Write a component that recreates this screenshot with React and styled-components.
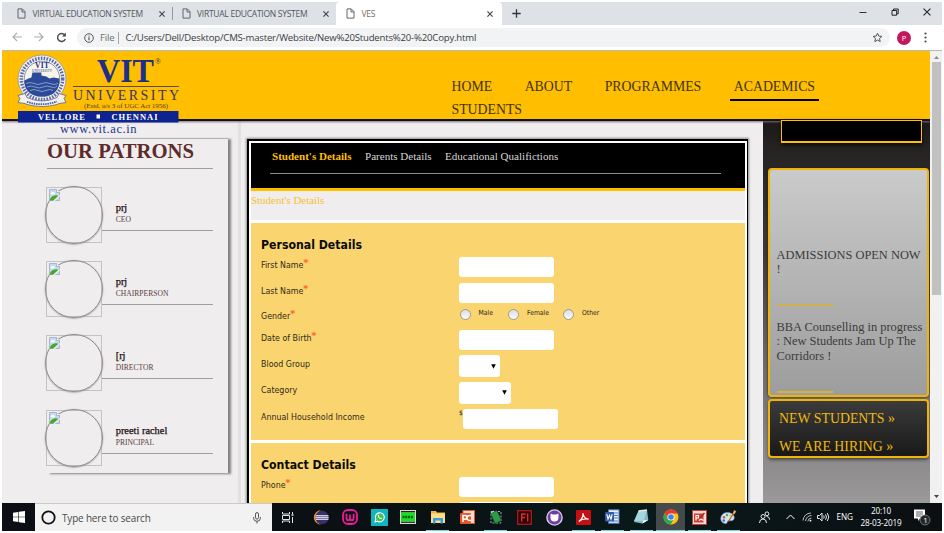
import React from 'react';
import styled, { createGlobalStyle, css } from 'styled-components';

const GlobalStyle = createGlobalStyle`
  * { box-sizing: border-box; }
  html, body { margin: 0; background: #fff; overflow: hidden; }
`;

const serif = '"Liberation Serif", serif';
const sans = '"Open Sans", "Noto Sans", sans-serif';
const gold = '#ffbe00';

const Screen = styled.div`
  width: 940px;
  height: 529px;
  margin: 2px;
  display: flex;
  flex-direction: column;
  overflow: hidden;
  background: #fff;
  cursor: default;
  svg { display: block; flex: none; }
`;

/* ---------- browser chrome ---------- */
const TabStrip = styled.div`
  height: 23px;
  flex: none;
  display: flex;
  background: #dee1e6;
`;
const Tab = styled.div`
  width: ${(p) => p.$width}px;
  display: flex;
  align-items: center;
  padding: 0 ${(p) => p.$right}px 0 ${(p) => p.$left}px;
  font: 8.5px/12px ${sans};
  letter-spacing: -0.27px;
  color: #54575b;
  white-space: nowrap;
  ${(p) => p.$active && css`
    background: #fff;
    border-radius: 4px 4px 0 0;
    color: #7b6a5c;
  `}
`;
const TabLabel = styled.span`
  flex: 1;
  margin-left: 6.5px;
`;
const TabDivider = styled.div`
  width: 1px;
  height: 13px;
  align-self: center;
  background: #96999d;
`;
const NewTab = styled.div`
  display: flex;
  align-items: center;
  margin-left: 10px;
`;
const WindowButtons = styled.div`
  margin-left: auto;
  display: flex;
  align-items: center;
  gap: 24px;
  padding: 0 11px 3px 0;
`;
const Toolbar = styled.div`
  height: 26px;
  flex: none;
  display: flex;
  align-items: center;
  padding: 0 10px;
  border-bottom: 1px solid #b9b9b9;
`;
const NavIcons = styled.div`
  display: flex;
  gap: 12px;
`;
const AddressBar = styled.div`
  height: 19px;
  width: 813px;
  margin-left: 10px;
  display: flex;
  align-items: center;
  padding: 0 7px;
  border-radius: 10px;
  background: #f1f3f4;
  font: 9.6px/14px ${sans};
  letter-spacing: -0.2px;
  color: #3c4043;
  white-space: nowrap;
`;
const Scheme = styled.span`
  margin: 0 6px 0 6px;
  padding-right: 4px;
  border-right: 1px solid #a5a8ab;
  line-height: 12px;
  color: #6c7074;
`;
const Url = styled.span`
  flex: 1;
`;
const Avatar = styled.div`
  width: 14px;
  height: 14px;
  margin: 0 13px 0 7px;
  border-radius: 50%;
  background: #c2185b;
  color: #fff;
  font: 7.5px/14px ${sans};
  text-align: center;
`;

/* ---------- page ---------- */
const Viewport = styled.div`
  height: 452px;
  flex: none;
  display: flex;
`;
const Page = styled.div`
  width: 928px;
  overflow: hidden;
  background: #efedee;
`;
const Header = styled.header`
  position: relative;
  z-index: 1;
  height: 70px;
  display: flex;
  justify-content: space-between;
  background: ${gold};
  border-bottom: 2px solid #14121c;
  box-shadow: 0 1px 2px #77737a;
`;
const Nav = styled.nav`
  width: 402px;
  margin-right: 80px;
  padding-top: 26px;
  display: flex;
  flex-wrap: wrap;
  align-content: flex-start;
  column-gap: 25.5px;
`;
const NavItem = styled.a`
  margin-bottom: -1px;
  padding: 0 3.5px 3px;
  border-bottom: 2.5px solid ${(p) => (p.$current ? '#000' : 'transparent')};
  font: 13.8px/19px ${serif};
  color: #40330e;
`;
const Columns = styled.div`
  display: flex;
  height: 382px;
`;

/* patrons */
const Left = styled.aside`
  width: 245px;
  flex: none;
  padding: 17px 0 0 45px;
  background: linear-gradient(90deg, transparent 236px, #e2e0e1 236px, #e2e0e1 238.5px, transparent 238.5px);
`;
const Patrons = styled.section`
  width: 181px;
  height: 335px;
  border-top: 1px solid #b5b3b4;
  box-shadow: 2.5px 1px 2px #858384;
`;
const PatronsTitle = styled.h2`
  margin: 0 15px 0 0;
  height: 29.5px;
  border-bottom: 1px solid #a09e9f;
  font: bold 20.7px/24px ${serif};
  color: #5e2b2b;
  white-space: nowrap;
`;
const Patron = styled.div`
  height: 74.4px;
  padding: 18px 15px 0 0;
  display: flex;
`;
const Photo = styled.div`
  width: 56px;
  height: 56px;
  margin-left: -1px;
  padding: 1px;
  border: 1px solid #c4c2c3;
`;
const PhotoRing = styled.div`
  width: 58px;
  height: 58px;
  margin: -3px;
  padding: 2px 3px;
  border-radius: 50%;
  border: 1px solid #8e8c8d;
  box-shadow: 0 0.5px 1.5px #8e8c8d;
`;
const PatronInfo = styled.div`
  flex: 1;
  height: 44px;
  padding: 15px 0 0 13.7px;
  border-bottom: 1px solid #a09e9f;
`;
const PatronName = styled.div`
  font: 10.4px/11px ${serif};
  -webkit-text-stroke: 0.25px #1c0c10;
  color: #1c0c10;
  white-space: nowrap;
`;
const PatronRole = styled.div`
  padding-top: 2px;
  font: 7.6px/10px ${serif};
  color: #5d3f40;
`;

/* form panel */
const Panel = styled.main`
  width: 501px;
  flex: none;
  margin-top: 18px;
  padding: 2px 2px 0 2px;
  border: solid #000;
  border-width: 2px 1px 0 2px;
  box-shadow: 0 0 2px 1px #8d8b8c;
  background: #fff;
`;
const FormTabs = styled.div`
  height: 48px;
  padding: 6px 24px 0 19px;
  background: #000;
  border-bottom: 3px solid ${gold};
`;
const FormTabList = styled.div`
  height: 25px;
  padding: 0 2px;
  display: flex;
  gap: 13.5px;
  border-bottom: 1px solid #8b8b8b;
`;
const FormTab = styled.span`
  font: ${(p) => (p.$current ? 'bold' : 'normal')} 11.05px/14px ${serif};
  color: ${(p) => (p.$current ? gold : '#d6d6d6')};
`;
const Crumb = styled.div`
  height: 29px;
  padding-top: 2px;
  background: #efedee;
  font: 10.95px/14px ${serif};
  color: #fbc02f;
`;
const Fieldset = styled.section`
  height: ${(p) => p.$height}px;
  margin-top: 3px;
  padding: 13px 0 0 10px;
  overflow: hidden;
  background: #fad56f;
`;
const FieldsetTitle = styled.h3`
  margin: 0;
  height: 18px;
  font: bold 12.2px/18px "DejaVu Sans Condensed", sans-serif;
  color: #0b0b06;
`;
const Field = styled.div`
  height: ${(p) => p.$height}px;
  display: grid;
  grid-template-columns: 198px 1fr;
  align-items: center;
  font: 8.8px/12px "DejaVu Sans Condensed", sans-serif;
  color: #2f2a18;
`;
const Label = styled.label`
  display: flex;
  margin-bottom: ${(p) => p.$lift ?? 5}px;
`;
const Star = styled.span`
  margin-top: -1.5px;
  color: #ff5430;
  font: 9.5px/12px "DejaVu Sans", sans-serif;
  -webkit-text-stroke: 0.2px #ff5430;
`;
const Control = styled.div`
  display: flex;
`;
const Input = styled.div`
  width: 95px;
  height: 20.5px;
  border-radius: 3px;
  background: #fff;
`;
const Select = styled(Input)`
  width: ${(p) => p.$width}px;
  height: 22px;
  display: flex;
  align-items: center;
  justify-content: flex-end;
  padding-right: 4px;
`;
const Currency = styled.span`
  width: 4px;
  font-size: 6.5px;
  line-height: 9px;
  color: #222;
`;
const Radios = styled.div`
  display: flex;
  margin-bottom: 6px;
`;
const RadioOption = styled.div`
  width: ${(p) => p.$width}px;
  display: flex;
  align-items: center;
  font-size: 6.8px;
  line-height: 11px;
  color: #2b2616;
`;
const RadioDot = styled.span`
  width: 11px;
  height: 11px;
  margin: 2px 8px 0 0.5px;
  border: 1px solid #9d9b96;
  border-radius: 50%;
  background: linear-gradient(#dedede, #fafafa);
`;
const RadioText = styled.span`
  margin-top: -1px;
`;

/* sidebar */
const Side = styled.aside`
  width: 167px;
  margin-left: auto;
  display: flex;
  flex-direction: column;
  padding: 0 1px 0 5px;
  background: linear-gradient(#1c1918, #262423 8%, #3c3a3a 35%, #6b6969 62%, #878586 85%, #9b999a);
`;
const Banner = styled.div`
  position: relative;
  z-index: 2;
  width: 141px;
  height: 23px;
  flex: none;
  margin: -1px 0 25px 13px;
  border: 1px solid ${gold};
  border-bottom-width: 2px;
  background: #000;
  box-shadow: 0 2px 4px #0a0a0a;
`;
const News = styled.section`
  height: 229px;
  flex: none;
  padding: 78px 4px 0 6.5px;
  border: 2px solid #f0b306;
  border-radius: 4px;
  background: linear-gradient(#cacaca, #9d9d9d);
  box-shadow: 0 0 3px #222;
`;
const NewsItem = styled.p`
  margin: 0 -4px 0 0;
  height: ${(p) => p.$height}px;
  font: 12.42px/14.4px ${serif};
  color: #3b3b3b;
`;
const NewsRule = styled.div`
  width: 56px;
  height: 2px;
  margin-bottom: 14px;
  background: linear-gradient(#e0b228 50%, #c5b070 50%);
`;
const Links = styled.section`
  height: 59px;
  flex: none;
  margin-top: 2px;
  padding: 4px 0 0 9px;
  display: flex;
  flex-direction: column;
  border: 2px solid #f0b306;
  border-radius: 4px;
  background: linear-gradient(#3b3b3b, #191919);
  box-shadow: 0 2px 3px #4c4c4c;
`;
const SideLink = styled.a`
  font: 13.85px/28px ${serif};
  white-space: nowrap;
  color: #f2b90c;
`;

const Scrollbar = styled.div`
  width: 12px;
  display: flex;
  flex-direction: column;
  align-items: center;
  justify-content: space-between;
  padding: 5px 1px;
  background: #f1f1f1;
`;
const Thumb = styled.div`
  width: 9px;
  height: 233px;
  margin: 3px 0 auto;
  background: #c1c1c1;
`;

/* ---------- taskbar ---------- */
const Taskbar = styled.footer`
  height: 28px;
  flex: none;
  display: flex;
  background: linear-gradient(90deg, #0b0e14, #0a1113 45%, #09191a 70%, #0b0f12);
`;
const Start = styled.div`
  width: 33px;
  display: flex;
  align-items: center;
  justify-content: center;
`;
const Search = styled.div`
  width: 237px;
  display: flex;
  align-items: center;
  padding: 0 11px 0 6px;
  background: #f2f2f2;
  border-top: 1px solid #c9c9c9;
  font: 9.9px/14px ${sans};
  letter-spacing: -0.12px;
  color: #4a4a4a;
`;
const SearchText = styled.span`
  flex: 1;
  margin-left: 6px;
`;
const TaskView = styled.div`
  width: 34.5px;
  display: flex;
  align-items: center;
  padding-left: 10px;
`;
const TaskButton = styled.div`
  width: 29.14px;
  display: flex;
  flex-direction: column;
  align-items: center;
  justify-content: center;
  position: relative;
  background: ${(p) => (p.$focused ? '#454b4c' : 'none')};
  &::after {
    content: '';
    position: absolute;
    left: ${(p) => (p.$focused ? 0 : 3)}px;
    right: ${(p) => (p.$focused ? 0 : 3)}px;
    bottom: 0;
    height: ${(p) => (p.$running ? 1.5 : 0)}px;
    background: #6fd6e6;
  }
`;
const Tray = styled.div`
  margin-left: auto;
  width: 184px;
  display: flex;
  align-items: center;
  color: #fff;
  font: 8.2px/12px ${sans};
  letter-spacing: -0.15px;
`;
const TrayIcons = styled.div`
  width: 78.5px;
  display: flex;
  align-items: center;
  gap: 5px;
`;
const Language = styled.span`
  width: 23.5px;
`;
const Clock = styled.div`
  width: 42px;
  text-align: center;
  white-space: nowrap;
`;
const Notify = styled.div`
  margin-left: 12px;
`;

/* ---------- icons ---------- */
const FileIcon = () => (
  <svg width="9" height="11" viewBox="0 0 9 11" fill="none" stroke="#63666a" strokeWidth="1">
    <path d="M1 .9h4.3L8 3.6v6.5H1zM5 1v3h3" />
  </svg>
);
const CloseIcon = ({ size = 6, color = '#46494d', w = 1.2 }) => (
  <svg width={size} height={size} viewBox="0 0 6 6" stroke={color} strokeWidth={w}>
    <path d="M.4.4l5.2 5.2M5.6.4L.4 5.6" />
  </svg>
);
const PlusIcon = () => (
  <svg width="9" height="9" viewBox="0 0 9 9" stroke="#33363a" strokeWidth="1.300">
    <path d="M4.500.3v8.400M.3 4.500h8.400" />
  </svg>
);

const Logo = () => (
  <svg width="180" height="86" viewBox="0 0 180 86" fill="#1d2f86" fontFamily="Liberation Serif, serif">
    <g transform="translate(0 -1.500)">
      <circle cx="40" cy="29.500" r="24" fill="#f4f1e8" stroke="#8a93ad" strokeWidth=".8" />
      <circle cx="40" cy="29.500" r="20.700" fill="none" stroke="#5b6bab" strokeWidth="3.400" strokeDasharray="1.600 1.300" />
      <circle cx="40" cy="29.500" r="17.800" fill="#f7f4ea" stroke="#3c4f9c" strokeWidth=".6" />
      <path d="M22.400 31l4-2 3-1 1-5h9v3l5 1 3 2 4-1 6 1c.5 7-2 12-6 15-6 4-17 4-23 0-4-3-6-7-6-13z" fill="#2b4a98" />
      <path d="M24 34q4-2 8 0t8 0 8 0 8 0M25 37.500q4-2 8 0t8 0 8 0 6-1M28 41q4-2 8 0t8 0 7 0" fill="none" stroke="#9fb0d6" strokeWidth=".8" />
      <text x="33" y="18.500" fontSize="7.500" fontWeight="bold" textLength="14">VIT</text>
      <text x="30" y="22" fontSize="3" textLength="20">UNIVERSITY</text>
      <path d="M16 46l7-2 2 4q15 7 30 0l2-4 7 2-2 3 2 4-7 1-2 1q-15 4-30 0l-2-1-7-1 2-4z" fill="#f4f1e8" stroke="#56659f" strokeWidth=".8" />
      <path d="M25 52.300q15 5 30-.3" fill="none" stroke="#4a5b9d" strokeWidth="1.800" strokeDasharray="1.500 .8" />
    </g>
    <text x="95" y="31" fontSize="33" fontWeight="bold" textLength="57" lengthAdjust="spacingAndGlyphs">VIT</text>
    <text x="153" y="12.500" fontSize="7.500">®</text>
    <rect x="71" y="35" width="106" height="1" fill="#5b4c52" />
    <text x="71" y="48.500" fontSize="14" textLength="106" fill="#3a3563">UNIVERSITY</text>
    <text x="82" y="57" fontSize="7" textLength="84" fill="#52412f">(Estd. u/s 3 of UGC Act 1956)</text>
    <rect x="16" y="60" width="160.500" height="11.500" fill="#0d2390" />
    <text x="36" y="68.800" fontSize="8.500" fontWeight="bold" fill="#fff" textLength="47">VELLORE</text>
    <rect x="94.500" y="63.500" width="3.500" height="4" fill="#fff" />
    <text x="109.500" y="68.800" fontSize="8.500" fontWeight="bold" fill="#fff" textLength="46">CHENNAI</text>
    <text x="58" y="82" fontSize="12.500" textLength="76.500" fill="#25378c">www.vit.ac.in</text>
  </svg>
);

const BrokenImage = () => (
  <svg width="11" height="12" viewBox="0 0 11 12">
    <path d="M.5.5h7l3 3v8H.5z" fill="#c3d9f8" stroke="#a4abb5" strokeWidth=".8" />
    <path d="M7.500.5v3h3" fill="#fff" stroke="#9aa0a8" strokeWidth=".7" />
    <ellipse cx="3.800" cy="4.200" rx="2" ry="1.300" fill="#fff" />
    <path d="M1 10Q3 6 7.500 6.200L9.500 7 4.500 11.500H1z" fill="#44a82b" />
    <path d="M4.800 12L11 6.500" stroke="#efedee" strokeWidth="1.300" />
  </svg>
);

const icons = {
  eclipse: (
    <svg width="16" height="15" viewBox="0 0 16 15">
      <path d="M8 .3a7.200 7.200 0 0 0 0 14.400A8 8 0 0 1 8 .3z" fill="#f0962a" />
      <circle cx="9" cy="7.500" r="6.700" fill="#3c2f66" />
      <path d="M2.600 5.600h12.800M2.400 7.500h13.200M2.600 9.400h12.800" stroke="#c9c9e6" strokeWidth="1.300" />
    </svg>
  ),
  wamp: (
    <svg width="16" height="16" viewBox="0 0 16 16" fill="none" stroke="#f4189b">
      <rect x="1" y="1" width="14" height="14" rx="5" strokeWidth="1.800" />
      <path d="M4.500 4.800v4.400q0 2 1.800 2T8 9.200V5.500v3.700q0 2 1.800 2t1.800-2V4.800" strokeWidth="1.700" />
    </svg>
  ),
  whatsapp: (
    <svg width="17" height="17" viewBox="0 0 17 17">
      <rect width="17" height="17" fill="#0fb5c1" />
      <path d="M4 13l.8-2.600A4.500 4.500 0 1 1 6.500 12.200z" fill="#41c352" stroke="#fff" strokeWidth="1.100" />
      <path d="M6.800 6.200q.1 3 3.400 4l1-1-1.300-.8-.7.500-1.300-1.300.4-.7-.7-1.200z" fill="#fff" />
    </svg>
  ),
  dosbox: (
    <svg width="16" height="14" viewBox="0 0 16 14">
      <rect width="16" height="14" fill="#d8d8d8" />
      <rect x="1" y="1" width="14" height="1.500" fill="#222" />
      <rect x="1" y="2.500" width="14" height="9" fill="#18e01e" />
      <path d="M2.500 7h11" stroke="#0a5d10" strokeWidth="2.400" strokeDasharray="2 .8" />
      <path d="M1 12.300h14" stroke="#222" strokeWidth="1.200" />
    </svg>
  ),
  folder: (
    <svg width="16" height="14" viewBox="0 0 16 14">
      <path d="M1 1h5l1 1.500h8V12H1z" fill="#e9b949" />
      <path d="M1 3.500h14v9.500H1z" fill="#fbdf86" />
      <path d="M3 13.500V8h10v5.500h-2.500v-3h-5v3z" fill="#3f9be0" />
    </svg>
  ),
  ppt: (
    <svg width="16" height="15" viewBox="0 0 16 15">
      <rect x="4" y=".5" width="11.500" height="13" fill="#f6d9c9" stroke="#d9572b" />
      <rect x="1" y="3" width="11" height="11" rx="1" fill="#e2562a" />
      <path d="M4 12V5.500h2a1.800 1.800 0 0 1 0 3.700H4M12 5.500h-1.500a2 2 0 0 0 0 5H12" fill="none" stroke="#fff" strokeWidth="1.500" />
    </svg>
  ),
  phone: (
    <svg width="16" height="16" viewBox="0 0 16 16">
      <rect x="3" y="2.500" width="10" height="11.500" fill="none" stroke="#a9adaa" strokeDasharray="2 1.500" />
      <rect x="4.500" y="2.500" width="7" height="11" rx="1" fill="#2d9a48" stroke="#12642a" strokeWidth=".8" transform="rotate(-25 8 8)" />
      <path d="M3 4l3-2" stroke="#e3e3e3" />
    </svg>
  ),
  flash: (
    <svg width="15" height="15" viewBox="0 0 15 15">
      <rect x=".7" y=".7" width="13.600" height="13.600" fill="#2a0306" stroke="#b3181c" strokeWidth="1.300" />
      <path d="M4.700 11.500V4h4M4.700 7.500h3.300M10.700 3.500v8" fill="none" stroke="#e8282d" strokeWidth="1.400" />
    </svg>
  ),
  github: (
    <svg width="17" height="17" viewBox="0 0 17 17">
      <circle cx="8.500" cy="8.500" r="7.600" fill="#6e3fa3" stroke="#d9cfe6" strokeWidth="1.400" />
      <path d="M4.500 4.500l2.300 1h3.400l2.300-1v4q0 4-4 4t-4-4z" fill="#fff" />
    </svg>
  ),
  acrobat: (
    <svg width="15" height="15" viewBox="0 0 15 15">
      <rect width="15" height="15" rx="1" fill="#c41012" />
      <path d="M2.800 11.500Q7.500 8 7 3.200q.5 5 5.500 6Q7 8 2.800 11.500z" fill="none" stroke="#fff" strokeWidth="1.200" />
    </svg>
  ),
  word: (
    <svg width="16" height="16" viewBox="0 0 16 16">
      <rect x="4.500" y=".8" width="10.500" height="13.500" fill="#e8effa" stroke="#4a77bd" />
      <path d="M9 4h5M10 6.500h4M10 9h4M8 12h6" stroke="#4a77bd" />
      <rect x="1" y="3" width="9" height="9.500" rx="1" fill="#2f5ca8" />
      <path d="M2.800 5.200l1.200 5 1.500-4 1.500 4 1.200-5" fill="none" stroke="#fff" strokeWidth="1.100" />
    </svg>
  ),
  notepad: (
    <svg width="16" height="16" viewBox="0 0 16 16">
      <path d="M5.500 2L14 1l1.300 10-5.800 3.500L1 13z" fill="#7fb9c4" />
      <path d="M5.500 2L14 1l-3.500 11L1 12z" fill="#a5d6dd" />
      <path d="M5.500 2L14 1" stroke="#e8e8e8" strokeWidth="1.600" />
      <path d="M15.300 11l-5.800 3.500.9-3z" fill="#fff" />
    </svg>
  ),
  chrome: (
    <svg width="16" height="16" viewBox="0 0 16 16">
      <circle cx="8" cy="8" r="7.500" fill="#fbc116" />
      <path d="M8 4.500h6.600A7.500 7.500 0 0 0 1.500 4.250L5 9.500z" fill="#e33b2e" />
      <path d="M1.500 4.250A7.500 7.500 0 0 0 7.500 15.500L11 9.800 5 9.800z" fill="#2da94f" />
      <circle cx="8" cy="8" r="3.600" fill="#fff" />
      <circle cx="8" cy="8" r="2.800" fill="#3f82ee" />
    </svg>
  ),
  picture: (
    <svg width="15" height="15" viewBox="0 0 15 15">
      <rect x=".5" y=".5" width="14" height="14" fill="#f6dcd8" stroke="#c43a32" />
      <rect x="2" y="3.500" width="9.500" height="9" fill="#cf3d33" />
      <path d="M4 10.500V5.500h2.500V8H4M7 10.500l2-1.500 2.500 1.500" stroke="#fff" strokeWidth="1.200" fill="none" />
      <path d="M7.500 8.500l5-5.500" stroke="#a9241d" strokeWidth="1.300" />
    </svg>
  ),
  paint: (
    <svg width="17" height="16" viewBox="0 0 17 16">
      <path d="M7.500 3.500C3 3.500.8 6.800.8 9.600c0 3.800 3.500 5.400 5.400 4.800 1.500-.5.600-2 1.800-2.700 1.500-.9 3 .6 4.800-.4 1.500-.9 1.700-2.500 1.200-4C13.300 5 10.500 3.500 7.500 3.500z" fill="#cfe6f7" stroke="#6fa3cc" strokeWidth=".6" />
      <circle cx="4" cy="8.200" r="1.200" fill="#e0503a" />
      <circle cx="7" cy="6" r="1.200" fill="#4cae4c" />
      <circle cx="10.500" cy="6.500" r="1.100" fill="#f0c030" />
      <circle cx="3.800" cy="11.500" r="1.200" fill="#3567c6" />
      <path d="M8.500 12.500l5.500-9" stroke="#c96c1e" strokeWidth="1.400" />
      <path d="M13 4.500l1-3.500 2.300 1.400-2.300 3z" fill="#f2b25b" />
    </svg>
  ),
};

const tasks = [
  ['eclipse'], ['wamp'], ['whatsapp'], ['dosbox'], ['folder', true], ['ppt'], ['phone', true],
  ['flash'], ['github'], ['acrobat', true], ['word', true], ['notepad', true],
  ['chrome', true, true], ['picture', true], ['paint', true],
];

const patrons = [
  ['prj', 'CEO'], ['prj', 'CHAIRPERSON'], ['[rj', 'DIRECTOR'], ['preeti rachel', 'PRINCIPAL'],
];

const Arrow = () => (
  <svg width="5" height="5" viewBox="0 0 5 5"><path d="M.2.300h4.600L2.500 4.700z" fill="#000" /></svg>
);

function FormField({ label, required, height, lift, children }) {
  return (
    <Field $height={height}>
      <Label $lift={lift}>{label}{required && <Star>*</Star>}</Label>
      {children}
    </Field>
  );
}

export default function App() {
  return (
    <Screen>
      <GlobalStyle />
      <TabStrip>
        <Tab $width={170} $left={15} $right={7.5}>
          <FileIcon /><TabLabel>VIRTUAL EDUCATION SYSTEM</TabLabel><CloseIcon />
        </Tab>
        <TabDivider />
        <Tab $width={163} $left={8.5} $right={7}>
          <FileIcon /><TabLabel>VIRTUAL EDUCATION SYSTEM</TabLabel><CloseIcon />
        </Tab>
        <Tab $width={166} $left={10} $right={9} $active>
          <FileIcon /><TabLabel>VES</TabLabel><CloseIcon />
        </Tab>
        <NewTab><PlusIcon /></NewTab>
        <WindowButtons>
          <svg width="8" height="8" viewBox="0 0 8 8"><path d="M.5 4.500h7" stroke="#333" strokeWidth="1" /></svg>
          <svg width="8" height="8" viewBox="0 0 8 8" fill="none" stroke="#222"><path d="M1 2.500h4.700v4.700H1zM2.500 2.300V1h4.700v4.700H5.800" /></svg>
          <CloseIcon size={8} color="#222" w={0.8} />
        </WindowButtons>
      </TabStrip>

      <Toolbar>
        <NavIcons>
          <svg width="10" height="10" viewBox="0 0 10 10" fill="none" stroke="#a9abae" strokeWidth="1.100"><path d="M9.800 5H1M5 1L1 5l4 4" /></svg>
          <svg width="10" height="10" viewBox="0 0 10 10" fill="none" stroke="#a9abae" strokeWidth="1.100"><path d="M.2 5H9M5 1l4 4-4 4" /></svg>
          <svg width="11" height="11" viewBox="0 0 11 11" fill="none" stroke="#46494d" strokeWidth="1.400"><path d="M9.300 7A4 4 0 1 1 8.600 2.800" /><path d="M9.900.6v4H6z" fill="#46494d" stroke="none" /></svg>
        </NavIcons>
        <AddressBar>
          <svg width="10" height="10" viewBox="0 0 10 10" fill="none" stroke="#54575b"><circle cx="5" cy="5" r="4.300" /><path d="M5 4.300v3M5 2.400v1.100" strokeWidth="1.200" /></svg>
          <Scheme>File</Scheme>
          <Url>C:/Users/Dell/Desktop/CMS-master/Website/New%20Students%20-%20Copy.html</Url>
          <svg width="11" height="11" viewBox="0 0 11 11" fill="none" stroke="#54575b"><path d="M5.500 1.200l1.300 2.900 3.100.3-2.400 2.100.7 3.100-2.700-1.600-2.700 1.600.7-3.100-2.400-2.100 3.100-.3z" /></svg>
        </AddressBar>
        <Avatar>P</Avatar>
        <svg width="3" height="11" viewBox="0 0 3 11" fill="#46494d"><circle cx="1.500" cy="1.500" r="1.100" /><circle cx="1.500" cy="5.500" r="1.100" /><circle cx="1.500" cy="9.500" r="1.100" /></svg>
      </Toolbar>

      <Viewport>
        <Page>
          <Header>
            <Logo />
            <Nav>
              <NavItem>HOME</NavItem>
              <NavItem>ABOUT</NavItem>
              <NavItem>PROGRAMMES</NavItem>
              <NavItem $current>ACADEMICS</NavItem>
              <NavItem>STUDENTS</NavItem>
            </Nav>
          </Header>
          <Columns>
            <Left>
              <Patrons>
                <PatronsTitle>OUR PATRONS</PatronsTitle>
                {patrons.map(([name, role], i) => (
                  <Patron key={i}>
                    <Photo><PhotoRing><BrokenImage /></PhotoRing></Photo>
                    <PatronInfo>
                      <PatronName>{name}</PatronName>
                      <PatronRole>{role}</PatronRole>
                    </PatronInfo>
                  </Patron>
                ))}
              </Patrons>
            </Left>

            <Panel>
              <FormTabs>
                <FormTabList>
                  <FormTab $current>Student's Details</FormTab>
                  <FormTab>Parents Details</FormTab>
                  <FormTab>Educational Qualifictions</FormTab>
                </FormTabList>
              </FormTabs>
              <Crumb>Student's Details</Crumb>
              <Fieldset $height={217}>
                <FieldsetTitle>Personal Details</FieldsetTitle>
                <FormField label="First Name" required height={26}><Input /></FormField>
                <FormField label="Last Name" required height={26}><Input /></FormField>
                <FormField label="Gender" required height={21} lift={2}>
                  <Radios>
                    <RadioOption $width={48.5}><RadioDot /><RadioText>Male</RadioText></RadioOption>
                    <RadioOption $width={55}><RadioDot /><RadioText>Female</RadioText></RadioOption>
                    <RadioOption $width={50}><RadioDot /><RadioText>Other</RadioText></RadioOption>
                  </Radios>
                </FormField>
                <FormField label="Date of Birth" required height={26}><Input /></FormField>
                <FormField label="Blood Group" height={26.5}><Select $width={41}><Arrow /></Select></FormField>
                <FormField label="Category" height={26.5}><Select $width={52}><Arrow /></Select></FormField>
                <FormField label="Annual Household Income" height={26}>
                  <Control><Currency>$</Currency><Input /></Control>
                </FormField>
              </Fieldset>
              <Fieldset $height={70}>
                <FieldsetTitle>Contact Details</FieldsetTitle>
                <FormField label="Phone" required height={26}><Input /></FormField>
                <FormField height={25}><Input /></FormField>
              </Fieldset>
            </Panel>

            <Side>
              <Banner />
              <News>
                <NewsItem $height={56}>ADMISSIONS OPEN NOW !</NewsItem>
                <NewsRule />
                <NewsItem $height={71}>BBA Counselling in progress : New Students Jam Up The Corridors !</NewsItem>
                <NewsRule />
              </News>
              <Links>
                <SideLink>NEW STUDENTS »</SideLink>
                <SideLink>WE ARE HIRING »</SideLink>
              </Links>
            </Side>
          </Columns>
        </Page>
        <Scrollbar>
          <svg width="5" height="3" viewBox="0 0 5 3"><path d="M0 3l2.500-3L5 3z" fill="#8b8b8b" /></svg>
          <Thumb />
          <svg width="5" height="3" viewBox="0 0 5 3"><path d="M0 0l2.500 3L5 0z" fill="#444" /></svg>
        </Scrollbar>
      </Viewport>

      <Taskbar>
        <Start>
          <svg width="12" height="12" viewBox="0 0 12 12" fill="#fff"><path d="M0 1.700l5.400-.8v4.800H0zM6 .8L12 0v5.700H6zM0 6.300h5.400v4.800L0 10.300zM6 6.300h6V12l-6-.8z" /></svg>
        </Start>
        <Search>
          <svg width="15" height="15" viewBox="0 0 15 15" fill="none" stroke="#111" strokeWidth="1.800"><circle cx="7.500" cy="7.500" r="6.200" /></svg>
          <SearchText>Type here to search</SearchText>
          <svg width="8" height="12" viewBox="0 0 8 12" fill="none" stroke="#555"><rect x="2.500" y=".6" width="3" height="6.500" rx="1.500" /><path d="M.7 5v1.500a3.300 2.800 0 0 0 6.600 0V5M4 9.300v2.200" /></svg>
        </Search>
        <TaskView>
          <svg width="12" height="11" viewBox="0 0 12 11" fill="none" stroke="#e3e3e3"><path d="M.5 0v2h7V0M.5 11V9h7v2M.5 3.500h7v4h-7zM10.500 0v2M10.500 5v6" /><path d="M9.500 3h2" strokeWidth="1.500" /></svg>
        </TaskView>
        {tasks.map(([name, running, focused]) => (
          <TaskButton key={name} $running={running} $focused={focused}>{icons[name]}</TaskButton>
        ))}
        <Tray>
          <TrayIcons>
            <svg width="13" height="13" viewBox="0 0 13 13" fill="none" stroke="#e8e8e8"><circle cx="5" cy="5.500" r="2" /><path d="M1.500 12q0-4 3.500-4t3.500 4" /><circle cx="9" cy="2.800" r="1.900" /><path d="M8.500 5.500q3 0 3.200 3.200" /></svg>
            <svg width="21" height="8" viewBox="0 0 21 8" fill="none" stroke="#fff"><path d="M10.500 6L14.500 2l4 4" /></svg>
            <svg width="10" height="10" viewBox="0 0 10 10" fill="none" stroke="#c9cccc" strokeWidth=".9"><path d="M1 8.500A8 8 0 0 1 9 1M3.500 9A6 6 0 0 1 9.500 3.500M5.800 9.300A4 4 0 0 1 9.500 6" /><circle cx="8.500" cy="8.700" r=".9" fill="#fff" stroke="none" /></svg>
            <svg width="13" height="10" viewBox="0 0 13 10" fill="none" stroke="#fff" strokeWidth=".9"><path d="M.5 3.500h2L5 1v8L2.500 6.500h-2zM6.700 3.500q1 1.500 0 3M8.500 2.300q2 2.700 0 5.400M10.300 1q3 4 0 8" /></svg>
          </TrayIcons>
          <Language>ENG</Language>
          <Clock>20:10<br />28-03-2019</Clock>
          <Notify>
            <svg width="17" height="18" viewBox="0 0 17 18">
              <path d="M0 1.500h11v9H6L4 13v-2.500H0z" fill="#fff" />
              <path d="M2 4h7M2 6h7M2 8h5" stroke="#333" strokeWidth=".8" />
              <circle cx="11" cy="12" r="5" fill="#222627" stroke="#888" strokeWidth=".8" />
              <text x="9.200" y="15" fontSize="8" fill="#fff" fontFamily="Open Sans, sans-serif">1</text>
            </svg>
          </Notify>
        </Tray>
      </Taskbar>
    </Screen>
  );
}
